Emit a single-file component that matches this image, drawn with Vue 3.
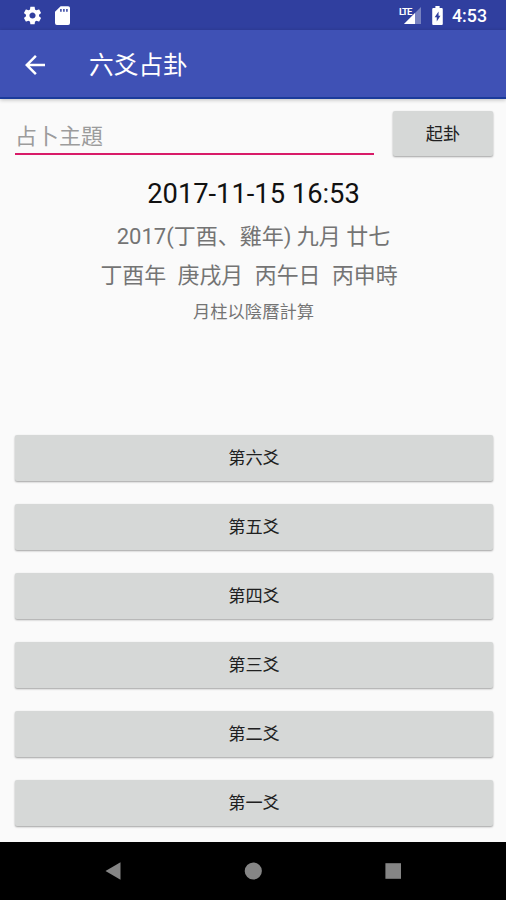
<script setup>
const lines = ['第六爻', '第五爻', '第四爻', '第三爻', '第二爻', '第一爻']
</script>

<template>
  <div class="screen">
    <header class="status">
      <svg class="gear" viewBox="0 0 24 24"><path d="M19.43 12.98c.04-.32.07-.64.07-.98s-.03-.66-.07-.98l2.11-1.65c.19-.15.24-.42.12-.64l-2-3.46c-.12-.22-.39-.3-.61-.22l-2.49 1c-.52-.4-1.08-.73-1.69-.98l-.38-2.65C14.46 2.18 14.25 2 14 2h-4c-.25 0-.46.18-.49.42l-.38 2.65c-.61.25-1.17.59-1.69.98l-2.49-1c-.23-.09-.49 0-.61.22l-2 3.46c-.13.22-.07.49.12.64l2.11 1.65c-.04.32-.07.65-.07.98s.03.66.07.98l-2.11 1.65c-.19.15-.24.42-.12.64l2 3.46c.12.22.39.3.61.22l2.49-1c.52.4 1.08.73 1.69.98l.38 2.65c.03.24.24.42.49.42h4c.25 0 .46-.18.49-.42l.38-2.65c.61-.25 1.17-.59 1.69-.98l2.49 1c.23.09.49 0 .61-.22l2-3.46c.12-.22.07-.49-.12-.64l-2.11-1.65zM12 15.5c-1.93 0-3.5-1.57-3.5-3.5s1.57-3.5 3.5-3.5 3.5 1.57 3.5 3.5-1.57 3.5-3.5 3.5z" /></svg>
      <svg class="sd" viewBox="0 0 16 20"><path fill-rule="evenodd" d="M6 0h8a2 2 0 0 1 2 2v16a2 2 0 0 1-2 2H2a2 2 0 0 1-2-2V6zM5.5 3v3h1.6V3zM8.7 3v3h1.6V3zM11.9 3v3h1.6V3z" /></svg>
      <span class="spacer"></span>
      <span class="network">
        <svg class="signal" viewBox="0 0 17 17"><path opacity=".35" d="M17 0v17H0z" /><path d="M11 6v11H0z" /></svg>
        <span class="lte">LTE</span>
      </span>
      <svg class="battery" viewBox="0 0 10 18"><path fill-rule="evenodd" d="M3 0h4v2h2a1 1 0 0 1 1 1v14a1 1 0 0 1-1 1H1a1 1 0 0 1-1-1V3a1 1 0 0 1 1-1h2zM6 5.2L2.3 10.6h2v4.2L7.8 9.2H6z" /></svg>
      <span class="clock">4:53</span>
    </header>
    <div class="toolbar">
      <svg class="back" viewBox="0 0 24 24"><path d="M20 11H7.83l5.59-5.59L12 4l-8 8 8 8 1.41-1.41L7.83 13H20v-2z" /></svg>
      <h1>六爻占卦</h1>
    </div>
    <main>
      <div class="topic">
        <input type="text" placeholder="占卜主題" aria-label="占卜主題" />
        <button class="start">起卦</button>
      </div>
      <div class="dates">
        <p class="now">2017-11-15 16:53</p>
        <p class="lunar">2017(丁酉、雞年) 九月 廿七</p>
        <p class="pillars"><span>丁酉年</span><span>庚戌月</span><span>丙午日</span><span>丙申時</span></p>
        <p class="note">月柱以陰曆計算</p>
      </div>
      <div class="yao">
        <button v-for="line in lines" :key="line">{{ line }}</button>
      </div>
    </main>
    <nav>
      <svg viewBox="0 0 20 20"><path d="M17.5 1.2v17.6L2.5 10z" /></svg>
      <svg viewBox="0 0 20 20"><circle cx="10.3" cy="10" r="8.6" /></svg>
      <svg viewBox="0 0 20 20"><path d="M2.4 2.2h15.6v15.6H2.4z" /></svg>
    </nav>
  </div>
</template>

<style>
body { margin: 0; }
</style>

<style scoped>
.screen {
  width: 506px;
  height: 900px;
  display: flex;
  flex-direction: column;
  overflow: hidden;
  background: #fafafa;
  font-family: Roboto, "Noto Sans CJK SC", sans-serif;
}
svg { display: block; fill: #fff; flex: none; }
.status {
  box-sizing: border-box;
  height: 30px;
  padding: 0 19px 0 22px;
  display: flex;
  align-items: center;
  background: #303f9f;
}
.gear { width: 21px; height: 21px; }
.sd { width: 15px; height: 19px; margin-left: 12px; }
.spacer { flex: 1; }
.network { position: relative; width: 22px; height: 17px; }
.signal { width: 17px; height: 17px; margin-left: 5px; }
.lte {
  position: absolute;
  left: 0;
  top: 0;
  color: #fff;
  font-size: 9.5px;
  line-height: 9px;
  font-weight: 700;
  letter-spacing: -1px;
}
.battery { width: 11px; height: 19px; margin: 0 9px 0 11px; }
.clock { color: #fff; font-size: 17.8px; font-weight: 500; line-height: 30px; padding-top: 1px; }
.toolbar {
  box-sizing: border-box;
  height: 69px;
  padding: 2px 0 0 20px;
  display: flex;
  align-items: center;
  background: #3f51b5;
  border-bottom: 2px solid #1b3b9b;
  box-shadow: 0 1px 4px rgba(0, 0, 0, 0.24);
  z-index: 1;
}
.back { width: 30px; height: 30px; }
h1 {
  margin: 0 0 0 39px;
  padding-top: 3px;
  color: #fff;
  font-size: 24.7px;
  font-weight: 400;
  line-height: 36px;
}
main { height: 743px; display: flex; flex-direction: column; }
.topic { display: flex; justify-content: space-between; padding: 12px 13px 0 15px; }
input {
  box-sizing: border-box;
  width: 359px;
  height: 44px;
  padding: 9px 0 0;
  border: 0;
  border-bottom: 2px solid #d81b68;
  border-radius: 0;
  outline: none;
  background: transparent;
  font: 400 22px/32px Roboto, "Noto Sans CJK SC", sans-serif;
}
input::placeholder { color: #9c9c9c; opacity: 1; }
button {
  display: block;
  width: 100%;
  height: 46px;
  padding: 0;
  border: 0;
  border-radius: 2px;
  background: #d6d8d7;
  box-shadow: 0 1px 2px rgba(0, 0, 0, 0.36);
  color: #202020;
  font: 400 17.2px/24px Roboto, "Noto Sans CJK SC", sans-serif;
}
.topic .start { width: 100px; height: 45px; }
.dates { height: 279px; text-align: center; color: #747474; }
p { margin: 0; white-space: pre; }
.now { margin-top: 19px; padding-left: 1px; color: #111; font-size: 27.3px; line-height: 38px; }
.lunar { margin-top: 4px; padding-left: 1px; font-size: 22px; line-height: 40px; }
.pillars {
  display: flex;
  justify-content: center;
  gap: 11.5px;
  padding-right: 8px;
  font-size: 21.9px;
  line-height: 38px;
}
.note { padding-left: 1px; font-size: 17.3px; line-height: 34px; }
.yao { display: flex; flex-direction: column; gap: 23px; padding: 0 13px 0 15px; }
nav {
  flex: 1;
  display: flex;
  justify-content: center;
  align-items: center;
  gap: 120px;
  background: #000;
}
nav svg { width: 20px; height: 20px; fill: #858585; }
</style>
